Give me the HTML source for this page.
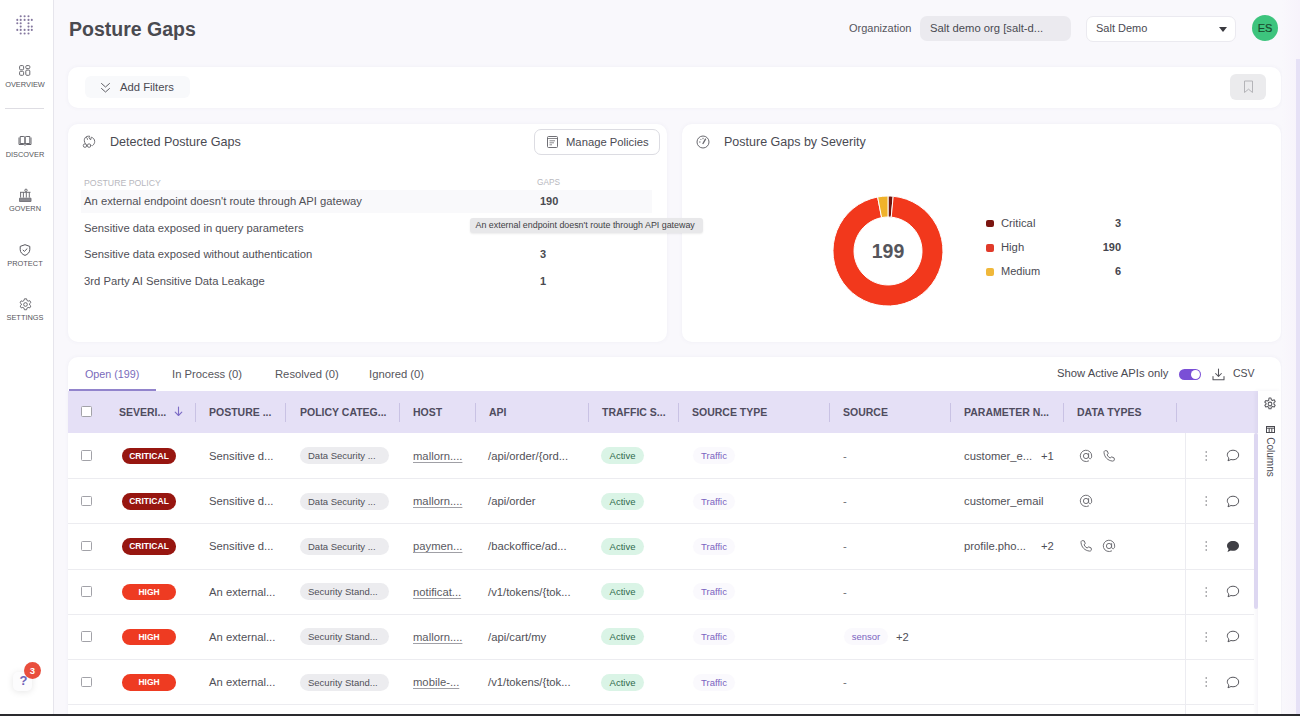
<!DOCTYPE html>
<html><head><meta charset="utf-8">
<style>
*{box-sizing:border-box;margin:0;padding:0}
html,body{width:1300px;height:716px;overflow:hidden}
body{font-family:"Liberation Sans",sans-serif;background:#f9f8fc;position:relative;color:#4a4a52}
.a{position:absolute}
.t{position:absolute;white-space:nowrap;line-height:1}
#side{left:0;top:0;width:54px;height:716px;background:#fff;border-right:1px solid #e6e5ec}
.navl{position:absolute;left:0;width:50px;text-align:center;font-size:7.4px;color:#55555b;line-height:1}
.card{position:absolute;background:#fff;border-radius:10px;box-shadow:0 0 4px rgba(90,80,140,0.06)}
.hd{position:absolute;top:391px;height:42px;background:#e5e0f6}
.th{position:absolute;top:407px;font-size:10.5px;font-weight:bold;color:#4f4c5e;white-space:nowrap;line-height:11px}
.sep{position:absolute;top:403px;width:1px;height:19px;background:#c9c2e4}
.row{position:absolute;left:68px;width:1186px;height:45px;background:#fff}
.cb{position:absolute;width:10.5px;height:10.5px;border:1.2px solid #a2a2a8;border-radius:1.5px;background:#fff}
.cell{position:absolute;font-size:11.25px;color:#505057;white-space:nowrap;line-height:12px}
.sev{position:absolute;left:122px;width:54px;height:16.5px;border-radius:8.25px;color:#fff;font-size:8.5px;font-weight:bold;text-align:center;line-height:16.5px}
.crit{background:#971610}
.high{background:#ee3b22}
.pill{position:absolute;left:300px;width:89px;height:17px;border-radius:8.5px;background:#ececef;font-size:9.5px;color:#505058;padding-left:8px;line-height:17px;white-space:nowrap}
.act{position:absolute;left:601px;width:43px;height:17px;border-radius:8.5px;background:#daf4e6;color:#2f6a4c;font-size:9.5px;text-align:center;line-height:17px}
.trf{position:absolute;left:693px;width:42px;height:17px;border-radius:8.5px;background:#faf9fd;color:#7b63c0;font-size:9.5px;text-align:center;line-height:17px}
.lnk{text-decoration:underline;text-decoration-color:#a0a0a6;text-underline-offset:2px;color:#5a5a62}
.ic{position:absolute}
.sns{position:absolute;left:844px;width:44px;height:17px;border-radius:8.5px;background:#faf9fd;color:#7b63c0;font-size:9.5px;text-align:center;line-height:17px}
.dots{position:absolute;left:1205px;width:3px;height:10px;background:radial-gradient(circle,#66666c 0.9px,transparent 1.1px) 0 0/3px 3.5px}
</style></head>
<body>
<!-- sidebar -->
<div id="side" class="a"></div>
<!-- logo -->
<svg class="ic" style="left:14px;top:13px" width="22" height="24" viewBox="14 13 22 24">
<g fill="#85789f">
<circle cx="20.7" cy="16.2" r="1.05"/><circle cx="24.6" cy="16.2" r="1.05"/><circle cx="28.5" cy="16.2" r="1.05"/>
<circle cx="17.3" cy="19.9" r="1.05"/><circle cx="20.7" cy="19.9" r="1.05"/><circle cx="24.6" cy="19.9" r="1.05"/><circle cx="28.5" cy="19.9" r="1.05"/><circle cx="31.8" cy="19.9" r="1.05"/>
<circle cx="17.3" cy="23.2" r="1.05"/><circle cx="20.7" cy="23.2" r="1.05"/><circle cx="28.5" cy="23.2" r="1.05"/>
<circle cx="20.7" cy="26.6" r="1.05"/><circle cx="28.5" cy="26.6" r="1.05"/><circle cx="31.8" cy="26.6" r="1.05"/>
<circle cx="17.3" cy="29.9" r="1.05"/><circle cx="20.7" cy="29.9" r="1.05"/><circle cx="24.6" cy="29.9" r="1.05"/><circle cx="28.5" cy="29.9" r="1.05"/><circle cx="31.8" cy="29.9" r="1.05"/>
<circle cx="20.7" cy="33.5" r="1.05"/><circle cx="24.6" cy="33.5" r="1.05"/><circle cx="28.5" cy="33.5" r="1.05"/>
</g></svg>
<!-- overview -->
<svg class="ic" style="left:19px;top:65px" width="12" height="11" viewBox="0 0 12 11" fill="none" stroke="#606066" stroke-width="0.95"><rect x="0.600" y="0.600" width="4" height="4.200" rx="1"/><rect x="6.800" y="0.600" width="4" height="3" rx="1"/><rect x="0.600" y="6.300" width="4" height="4" rx="1"/><rect x="6.800" y="5.100" width="4" height="5.200" rx="1"/></svg>
<div class="navl" style="top:80.5px">OVERVIEW</div>
<div class="a" style="left:5px;top:108px;width:39px;height:1px;background:#dedde3"></div>
<!-- discover -->
<svg class="ic" style="left:18px;top:135px" width="14" height="11" viewBox="0 0 14 11" fill="none" stroke="#606066" stroke-width="0.95" stroke-linejoin="round"><path d="M2.200 1.500h3.600c.7 0 1.200.5 1.200 1.200v6.300c-.3-.3-.7-.5-1.200-.5H2.200z M11.800 1.500H8.200c-.7 0-1.200.5-1.200 1.200v6.300c.3-.3.7-.5 1.200-.5h3.600z"/><path d="M1 2.500v7h4.800c.6 0 1 .5 1.200.8.2-.3.6-.8 1.200-.8H13v-7"/></svg>
<div class="navl" style="top:150.5px">DISCOVER</div>
<!-- govern -->
<svg class="ic" style="left:18px;top:188px" width="14" height="15" viewBox="0 0 14 15" fill="none" stroke="#606066" stroke-width="0.9"><circle cx="8" cy="2.300" r="1.200"/><path d="M2 4.300h10.500M2.600 4.300v5.300M5.400 4.300v5.300M8.300 4.300v5.300M11.300 4.300v5.300" /><path d="M1.500 10.200h11.500v3.300H1.500z" fill="#8a8a90" stroke="#707076"/></svg>
<div class="navl" style="top:205px">GOVERN</div>
<!-- protect -->
<svg class="ic" style="left:19px;top:244px" width="12" height="12" viewBox="0 0 12 12" fill="none" stroke="#55555c" stroke-width="1"><path d="M6 0.700L10.800 2.400V5.600c0 2.800-2.100 4.800-4.800 5.800C3.300 10.400 1.200 8.400 1.200 5.600V2.400z"/><path d="M3.800 5.900l1.600 1.500 2.900-2.900"/></svg>
<div class="navl" style="top:259.5px">PROTECT</div>
<!-- settings -->
<svg class="ic" style="left:18.5px;top:297.5px" width="13" height="13" viewBox="0 0 24 24" fill="none" stroke="#606066" stroke-width="1.7"><circle cx="12" cy="12" r="3.400"/><path d="M10 1.500h4l.7 3 2.200 1.300 3-.9 2 3.400-2.300 2.100v2.400l2.300 2.100-2 3.400-3-.9-2.200 1.300-.7 3h-4l-.7-3-2.200-1.300-3 .9-2-3.400 2.300-2.100V10.800L1.900 8.700l2-3.400 3 .9L9.300 4.500z" stroke-linejoin="round"/></svg>
<div class="navl" style="top:313.5px">SETTINGS</div>
<!-- help -->
<div class="a" style="left:13px;top:672px;width:19px;height:19px;border-radius:5px;background:#fcfcfd;box-shadow:0 1px 7px rgba(0,0,0,0.10)"></div>
<div class="t" style="left:19.5px;top:673.5px;font-size:13px;font-weight:bold;color:#6f62b8">?</div>
<div class="a" style="left:24px;top:662.2px;width:17.3px;height:17.3px;border-radius:9px;background:#e94e3c"></div>
<div class="t" style="left:24px;top:666px;width:17px;text-align:center;font-size:9.5px;color:#fff;font-weight:bold">3</div>


<!-- title -->
<div class="t" style="left:69px;top:19.5px;font-size:19.5px;font-weight:bold;color:#4a4a50">Posture Gaps</div>

<!-- top right -->
<div class="t" style="left:849px;top:23px;font-size:11px;color:#55555d">Organization</div>
<div class="a" style="left:920px;top:16px;width:151px;height:25px;border-radius:7px;background:#ebeaef"></div>
<div class="t" style="left:930px;top:23px;font-size:11.25px;color:#4a4a52">Salt demo org [salt-d...</div>
<div class="a" style="left:1086px;top:16px;width:150px;height:26px;border-radius:7px;background:#fff;border:1px solid #ebeaf0"></div>
<div class="t" style="left:1096px;top:23px;font-size:11px;color:#4a4a52">Salt Demo</div>
<div class="a" style="left:1219px;top:27px;width:0;height:0;border-left:4px solid transparent;border-right:4px solid transparent;border-top:5px solid #3a3a40"></div>
<div class="a" style="left:1252px;top:15px;width:26px;height:26px;border-radius:13px;background:#3dc47d"></div>
<div class="t" style="left:1252px;top:23px;width:26px;text-align:center;font-size:11px;color:#1b4a2e;-webkit-text-stroke:0.2px #1b4a2e">ES</div>

<!-- filter bar -->
<div class="card" style="left:68px;top:67px;width:1213px;height:41px"></div>
<div class="a" style="left:85px;top:76px;width:105px;height:22px;border-radius:6px;background:#f8f9fb"></div>
<div class="t" style="left:120px;top:81.7px;font-size:11.25px;color:#4a4a52">Add Filters</div>
<svg class="ic" style="left:100px;top:82px" width="11" height="12" viewBox="0 0 11 12" fill="none" stroke="#606066" stroke-width="1" stroke-linecap="round" stroke-linejoin="round"><path d="M1.500 1.500l4 3.500 4-3.500M1.500 6.500l4 3.500 4-3.500"/></svg>

<div class="a" style="left:1230px;top:74px;width:36px;height:26px;border-radius:6px;background:#ebebed"></div>
<svg class="ic" style="left:1243px;top:80px" width="11" height="14" viewBox="0 0 11 14" fill="none" stroke="#b4b4b8" stroke-width="1"><path d="M1.500 1h8v11.500L5.500 9.200 1.500 12.500z"/></svg>


<!-- left card -->
<div class="card" style="left:68px;top:124px;width:599px;height:218px"></div>
<div class="t" style="left:110px;top:136px;font-size:12.6px;color:#4a4a52">Detected Posture Gaps</div>
<svg class="ic" style="left:80px;top:133px" width="19" height="17" viewBox="0 0 19 17" fill="none" stroke="#6a6a70" stroke-width="0.95" stroke-linecap="round" stroke-linejoin="round"><circle cx="5" cy="12.6" r="1.75"/><circle cx="9.1" cy="12.6" r="1.75"/><path d="M5.3 10.6C4.100 9 3.900 6.500 5 4.900 6 3.500 7.800 3 9.700 3.200L9 4.700l1.600 2.200.7-2.700C13.200 4.700 14.700 6.300 14.700 8.500 14.700 10.100 13.900 11.600 12.600 12.600"/><path d="M6.300 4.400c.8.4 1.300 1.200 1.200 2"/></svg>

<div class="a" style="left:534px;top:129px;width:126px;height:26px;border-radius:7px;border:1px solid #dcdce2;background:#fff"></div>
<svg class="ic" style="left:547px;top:136px" width="11" height="12" viewBox="0 0 11 12" fill="none" stroke="#606066" stroke-width="0.9"><rect x="0.500" y="0.500" width="10" height="11" rx="1"/><path d="M0.500 2.500h10M2.500 4.800h5.500M2.500 6.800h4.500M2.500 8.800h2.500" stroke-width="0.75"/></svg>

<div class="t" style="left:566px;top:136.5px;font-size:11.25px;color:#4a4a52">Manage Policies</div>
<div class="t" style="left:84px;top:178.5px;font-size:8.75px;color:#b8b8be">POSTURE POLICY</div>
<div class="t" style="left:537px;top:178.5px;font-size:8.25px;color:#b8b8be">GAPS</div>
<div class="a" style="left:81px;top:190px;width:571px;height:23px;background:#f9f9fb"></div>
<div class="t" style="left:84px;top:196px;font-size:11.25px;color:#505057">An external endpoint doesn't route through API gateway</div>
<div class="t" style="left:540px;top:196px;font-size:11px;font-weight:bold;color:#4a4a50">190</div>
<div class="t" style="left:84px;top:223px;font-size:11.25px;color:#505057">Sensitive data exposed in query parameters</div>
<div class="t" style="left:84px;top:249px;font-size:11.25px;color:#505057">Sensitive data exposed without authentication</div>
<div class="t" style="left:540px;top:249px;font-size:11px;font-weight:bold;color:#4a4a50">3</div>
<div class="t" style="left:84px;top:276px;font-size:11.25px;color:#505057">3rd Party AI Sensitive Data Leakage</div>
<div class="t" style="left:540px;top:276px;font-size:11px;font-weight:bold;color:#4a4a50">1</div>


<!-- right card -->
<div class="card" style="left:682px;top:124px;width:599px;height:218px"></div>
<div class="t" style="left:724px;top:136px;font-size:12.5px;color:#4a4a52">Posture Gaps by Severity</div>
<svg class="ic" style="left:0;top:0" width="1300" height="400" viewBox="0 0 1300 400">
<path d="M888.00 196.00A55 55 0 0 1 893.20 196.25L891.22 217.15A34 34 0 0 0 888.00 217.00Z" fill="#6e140c" stroke="#fff" stroke-width="1"/>
<path d="M893.20 196.25A55 55 0 1 1 877.64 196.98L881.60 217.61A34 34 0 1 0 891.22 217.15Z" fill="#f2381c" stroke="#fff" stroke-width="1"/>
<path d="M877.64 196.98A55 55 0 0 1 888.00 196.00L888.00 217.00A34 34 0 0 0 881.60 217.61Z" fill="#f0b22a" stroke="#fff" stroke-width="1"/>
</svg>
<div class="t" style="left:848px;top:241.5px;width:80px;text-align:center;font-size:19.5px;font-weight:bold;color:#55555b">199</div>
<div class="a" style="left:986px;top:219.8px;width:7.7px;height:7.7px;border-radius:2px;background:#7b1510"></div>
<div class="a" style="left:986px;top:244px;width:7.7px;height:7.7px;border-radius:2px;background:#e03a2a"></div>
<div class="a" style="left:986px;top:268.2px;width:7.7px;height:7.7px;border-radius:2px;background:#f0b83a"></div>
<div class="t" style="left:1001px;top:217.5px;font-size:11.25px;color:#4a4a52">Critical</div>
<div class="t" style="left:1001px;top:241.8px;font-size:11.25px;color:#4a4a52">High</div>
<div class="t" style="left:1001px;top:266px;font-size:11px;color:#4a4a52">Medium</div>
<div class="t" style="left:1061px;top:217.5px;width:60px;text-align:right;font-size:11px;font-weight:bold;color:#45454d">3</div>
<div class="t" style="left:1061px;top:241.8px;width:60px;text-align:right;font-size:11px;font-weight:bold;color:#45454d">190</div>
<div class="t" style="left:1061px;top:266px;width:60px;text-align:right;font-size:11px;font-weight:bold;color:#45454d">6</div>
<!-- gauge icon -->
<svg class="ic" style="left:696px;top:135px" width="14" height="14" viewBox="0 0 14 14" fill="none" stroke="#6a6a70" stroke-width="1"><circle cx="7" cy="7" r="6"/><path d="M7 8.500L9.500 4.200" stroke-width="1.400" stroke-linecap="round"/><path d="M3.500 7h.6M4.600 4.200l.4.4M7 3.200v.6" stroke-linecap="round"/></svg>


<div class="a" style="left:470px;top:218px;width:233px;height:15px;border-radius:3px;background:#e8e8ea;box-shadow:0 1px 2px rgba(0,0,0,0.08)"></div>
<div class="t" style="left:475.5px;top:221px;font-size:8.9px;color:#3f3f45">An external endpoint doesn't route through API gateway</div>
<!-- table card -->
<div class="card" style="left:68px;top:357px;width:1213px;height:380px"></div>
<div class="t" style="left:85px;top:368.7px;font-size:10.75px;color:#7a6bbb">Open (199)</div>
<div class="a" style="left:69px;top:388.5px;width:87px;height:2px;background:#9284cc"></div>
<div class="t" style="left:172px;top:368.7px;font-size:11.25px;color:#56565c">In Process (0)</div>
<div class="t" style="left:275px;top:368.7px;font-size:11.25px;color:#56565c">Resolved (0)</div>
<div class="t" style="left:369px;top:368.7px;font-size:11.25px;color:#56565c">Ignored (0)</div>
<div class="t" style="left:1057px;top:368px;font-size:11.25px;color:#4a4a52">Show Active APIs only</div>
<div class="a" style="left:1179px;top:369px;width:22px;height:11px;border-radius:6px;background:#7a4fd6"></div>
<div class="a" style="left:1191px;top:370px;width:9px;height:9px;border-radius:5px;background:#fff"></div>
<div class="t" style="left:1233px;top:368px;font-size:10.5px;color:#4a4a52">CSV</div>
<svg class="ic" style="left:1212px;top:368px" width="13" height="13" viewBox="0 0 13 13" fill="none" stroke="#55555c" stroke-width="1.05" stroke-linecap="round" stroke-linejoin="round"><path d="M6.500 1v7.200M3.600 5.500l2.900 2.900 2.900-2.900M1 8.500v3.200h11V8.500"/></svg>



<div class="hd" style="left:68px;width:1190px"></div>
<div class="cb" style="left:81px;top:406px"></div>
<div class="th" style="left:119px">SEVERI...</div>
<svg class="ic" style="left:174px;top:406px" width="9" height="11" viewBox="0 0 9 11" fill="none" stroke="#7d6cc6" stroke-width="1.1" stroke-linecap="round" stroke-linejoin="round"><path d="M4.5 1v8.5M1.2 6.200l3.300 3.300 3.300-3.300"/></svg>
<div class="sep" style="left:195px"></div>
<div class="th" style="left:209px">POSTURE ...</div>
<div class="sep" style="left:285px"></div>
<div class="th" style="left:300px">POLICY CATEG...</div>
<div class="sep" style="left:399px"></div>
<div class="th" style="left:413px">HOST</div>
<div class="sep" style="left:475px"></div>
<div class="th" style="left:489px">API</div>
<div class="sep" style="left:588px"></div>
<div class="th" style="left:602px">TRAFFIC S...</div>
<div class="sep" style="left:678px"></div>
<div class="th" style="left:692px">SOURCE TYPE</div>
<div class="sep" style="left:829px"></div>
<div class="th" style="left:843px">SOURCE</div>
<div class="sep" style="left:950px"></div>
<div class="th" style="left:964px">PARAMETER N...</div>
<div class="sep" style="left:1063px"></div>
<div class="th" style="left:1077px">DATA TYPES</div>
<div class="sep" style="left:1176px"></div>

<!--rows-->
<div class="row" style="top:433px;height:45.3px"></div>
<div class="cb" style="left:81px;top:450.1px"></div>
<div class="sev crit" style="top:447.6px">CRITICAL</div>
<div class="cell" style="left:209px;top:449.6px">Sensitive d...</div>
<div class="pill" style="top:447.1px">Data Security ...</div>
<div class="cell lnk" style="left:413px;top:449.6px">mallorn....</div>
<div class="cell" style="left:488px;top:449.6px">/api/order/{ord...</div>
<div class="act" style="top:447.1px">Active</div>
<div class="trf" style="top:447.1px">Traffic</div>
<div class="cell" style="left:843px;top:449.6px;color:#707076">-</div>
<div class="cell" style="left:964px;top:449.6px">customer_e...</div>
<div class="cell" style="left:1041px;top:449.6px">+1</div>
<svg class="ic" style="left:1079px;top:448.6px" width="14" height="14" viewBox="0 0 14 14"><circle cx="7" cy="7" r="2.6" fill="none" stroke="#6a6a70" stroke-width="0.95"/><path d="M9.6 4.6v3.4c0 1.1.7 1.7 1.5 1.7s1.6-.8 1.6-2.6A5.7 5.7 0 1 0 9.6 12" fill="none" stroke="#6a6a70" stroke-width="0.95" stroke-linecap="round"/></svg>
<svg class="ic" style="left:1102px;top:448.6px" width="14" height="14" viewBox="0 0 14 14"><path d="M3.2 1.6l2 0.3 1.1 2.7-1.3 1.1c.7 1.6 1.8 2.7 3.3 3.4l1.1-1.3 2.7 1.1.3 2c-.2.8-1 1.3-1.9 1.2C5.700 11.500 2.500 8.300 2 3.500c-.1-.9.4-1.700 1.200-1.900z" fill="none" stroke="#65656b" stroke-width="0.95" stroke-linejoin="round"/></svg>
<svg class="ic" style="left:1204px;top:449.6px" width="4" height="12" viewBox="0 0 4 12" fill="#6a6a70"><circle cx="2.2" cy="2" r="0.75"/><circle cx="2.2" cy="6" r="0.75"/><circle cx="2.2" cy="9.9" r="0.75"/></svg>
<svg class="ic" style="left:1226px;top:449.1px" width="14" height="13" viewBox="0 0 14 13"><path d="M7 1.2C3.8 1.200 1.300 3.200 1.300 5.800c0 1.300.6 2.400 1.600 3.200L2 11.800l3-1.300c.6.200 1.300.3 2 .3 3.200 0 5.700-2 5.700-4.800S10.200 1.200 7 1.200z" fill="none" stroke="#58585e" stroke-width="1" stroke-linejoin="round"/></svg>
<div class="row" style="top:478.3px;height:45.3px"></div>
<div class="cb" style="left:81px;top:495.5px"></div>
<div class="sev crit" style="top:493.0px">CRITICAL</div>
<div class="cell" style="left:209px;top:495.0px">Sensitive d...</div>
<div class="pill" style="top:492.5px">Data Security ...</div>
<div class="cell lnk" style="left:413px;top:495.0px">mallorn....</div>
<div class="cell" style="left:488px;top:495.0px">/api/order</div>
<div class="act" style="top:492.5px">Active</div>
<div class="trf" style="top:492.5px">Traffic</div>
<div class="cell" style="left:843px;top:495.0px;color:#707076">-</div>
<div class="cell" style="left:964px;top:495.0px">customer_email</div>
<svg class="ic" style="left:1079px;top:494.0px" width="14" height="14" viewBox="0 0 14 14"><circle cx="7" cy="7" r="2.6" fill="none" stroke="#6a6a70" stroke-width="0.95"/><path d="M9.6 4.6v3.4c0 1.1.7 1.7 1.5 1.7s1.6-.8 1.6-2.6A5.7 5.7 0 1 0 9.6 12" fill="none" stroke="#6a6a70" stroke-width="0.95" stroke-linecap="round"/></svg>
<svg class="ic" style="left:1204px;top:495.0px" width="4" height="12" viewBox="0 0 4 12" fill="#6a6a70"><circle cx="2.2" cy="2" r="0.75"/><circle cx="2.2" cy="6" r="0.75"/><circle cx="2.2" cy="9.9" r="0.75"/></svg>
<svg class="ic" style="left:1226px;top:494.5px" width="14" height="13" viewBox="0 0 14 13"><path d="M7 1.2C3.8 1.200 1.300 3.200 1.300 5.800c0 1.300.6 2.400 1.600 3.200L2 11.800l3-1.300c.6.200 1.300.3 2 .3 3.200 0 5.700-2 5.700-4.800S10.200 1.200 7 1.200z" fill="none" stroke="#58585e" stroke-width="1" stroke-linejoin="round"/></svg>
<div class="row" style="top:523.6px;height:45.3px"></div>
<div class="cb" style="left:81px;top:540.8px"></div>
<div class="sev crit" style="top:538.2px">CRITICAL</div>
<div class="cell" style="left:209px;top:540.2px">Sensitive d...</div>
<div class="pill" style="top:537.8px">Data Security ...</div>
<div class="cell lnk" style="left:413px;top:540.2px">paymen...</div>
<div class="cell" style="left:488px;top:540.2px">/backoffice/ad...</div>
<div class="act" style="top:537.8px">Active</div>
<div class="trf" style="top:537.8px">Traffic</div>
<div class="cell" style="left:843px;top:540.2px;color:#707076">-</div>
<div class="cell" style="left:964px;top:540.2px">profile.pho...</div>
<div class="cell" style="left:1041px;top:540.2px">+2</div>
<svg class="ic" style="left:1079px;top:539.2px" width="14" height="14" viewBox="0 0 14 14"><path d="M3.2 1.6l2 0.3 1.1 2.7-1.3 1.1c.7 1.6 1.8 2.7 3.3 3.4l1.1-1.3 2.7 1.1.3 2c-.2.8-1 1.3-1.9 1.2C5.700 11.500 2.500 8.300 2 3.500c-.1-.9.4-1.700 1.200-1.900z" fill="none" stroke="#65656b" stroke-width="0.95" stroke-linejoin="round"/></svg>
<svg class="ic" style="left:1102px;top:539.2px" width="14" height="14" viewBox="0 0 14 14"><circle cx="7" cy="7" r="2.6" fill="none" stroke="#6a6a70" stroke-width="0.95"/><path d="M9.6 4.6v3.4c0 1.1.7 1.7 1.5 1.7s1.6-.8 1.6-2.6A5.7 5.7 0 1 0 9.6 12" fill="none" stroke="#6a6a70" stroke-width="0.95" stroke-linecap="round"/></svg>
<svg class="ic" style="left:1204px;top:540.2px" width="4" height="12" viewBox="0 0 4 12" fill="#6a6a70"><circle cx="2.2" cy="2" r="0.75"/><circle cx="2.2" cy="6" r="0.75"/><circle cx="2.2" cy="9.9" r="0.75"/></svg>
<svg class="ic" style="left:1226px;top:539.8px" width="14" height="13" viewBox="0 0 14 13"><path d="M7 1C3.6 1 1 3.100 1 5.800c0 1.300.6 2.400 1.600 3.300L1.500 12l3.300-1.500c.7.200 1.400.3 2.200.3 3.400 0 6-2.100 6-5S10.400 1 7 1z" fill="#3f3f45"/></svg>
<div class="row" style="top:568.9px;height:45.3px"></div>
<div class="cb" style="left:81px;top:586.0px"></div>
<div class="sev high" style="top:583.5px">HIGH</div>
<div class="cell" style="left:209px;top:585.5px">An external...</div>
<div class="pill" style="top:583.0px">Security Stand...</div>
<div class="cell lnk" style="left:413px;top:585.5px">notificat...</div>
<div class="cell" style="left:488px;top:585.5px">/v1/tokens/{tok...</div>
<div class="act" style="top:583.0px">Active</div>
<div class="trf" style="top:583.0px">Traffic</div>
<div class="cell" style="left:843px;top:585.5px;color:#707076">-</div>
<svg class="ic" style="left:1204px;top:585.5px" width="4" height="12" viewBox="0 0 4 12" fill="#6a6a70"><circle cx="2.2" cy="2" r="0.75"/><circle cx="2.2" cy="6" r="0.75"/><circle cx="2.2" cy="9.9" r="0.75"/></svg>
<svg class="ic" style="left:1226px;top:585.0px" width="14" height="13" viewBox="0 0 14 13"><path d="M7 1.2C3.8 1.200 1.300 3.200 1.300 5.800c0 1.300.6 2.400 1.600 3.200L2 11.800l3-1.300c.6.200 1.300.3 2 .3 3.200 0 5.700-2 5.700-4.800S10.200 1.200 7 1.200z" fill="none" stroke="#58585e" stroke-width="1" stroke-linejoin="round"/></svg>
<div class="row" style="top:614.2px;height:45.3px"></div>
<div class="cb" style="left:81px;top:631.4px"></div>
<div class="sev high" style="top:628.9px">HIGH</div>
<div class="cell" style="left:209px;top:630.9px">An external...</div>
<div class="pill" style="top:628.4px">Security Stand...</div>
<div class="cell lnk" style="left:413px;top:630.9px">mallorn....</div>
<div class="cell" style="left:488px;top:630.9px">/api/cart/my</div>
<div class="act" style="top:628.4px">Active</div>
<div class="trf" style="top:628.4px">Traffic</div>
<div class="sns" style="top:628.4px">sensor</div>
<div class="cell" style="left:896px;top:630.9px">+2</div>
<svg class="ic" style="left:1204px;top:630.9px" width="4" height="12" viewBox="0 0 4 12" fill="#6a6a70"><circle cx="2.2" cy="2" r="0.75"/><circle cx="2.2" cy="6" r="0.75"/><circle cx="2.2" cy="9.9" r="0.75"/></svg>
<svg class="ic" style="left:1226px;top:630.4px" width="14" height="13" viewBox="0 0 14 13"><path d="M7 1.2C3.8 1.200 1.300 3.200 1.300 5.800c0 1.300.6 2.400 1.600 3.200L2 11.800l3-1.300c.6.200 1.300.3 2 .3 3.200 0 5.700-2 5.700-4.800S10.200 1.200 7 1.200z" fill="none" stroke="#58585e" stroke-width="1" stroke-linejoin="round"/></svg>
<div class="row" style="top:659.5px;height:45.3px"></div>
<div class="cb" style="left:81px;top:676.6px"></div>
<div class="sev high" style="top:674.1px">HIGH</div>
<div class="cell" style="left:209px;top:676.1px">An external...</div>
<div class="pill" style="top:673.6px">Security Stand...</div>
<div class="cell lnk" style="left:413px;top:676.1px">mobile-...</div>
<div class="cell" style="left:488px;top:676.1px">/v1/tokens/{tok...</div>
<div class="act" style="top:673.6px">Active</div>
<div class="trf" style="top:673.6px">Traffic</div>
<div class="cell" style="left:843px;top:676.1px;color:#707076">-</div>
<svg class="ic" style="left:1204px;top:676.1px" width="4" height="12" viewBox="0 0 4 12" fill="#6a6a70"><circle cx="2.2" cy="2" r="0.75"/><circle cx="2.2" cy="6" r="0.75"/><circle cx="2.2" cy="9.9" r="0.75"/></svg>
<svg class="ic" style="left:1226px;top:675.6px" width="14" height="13" viewBox="0 0 14 13"><path d="M7 1.2C3.8 1.200 1.300 3.200 1.300 5.800c0 1.300.6 2.400 1.600 3.200L2 11.800l3-1.300c.6.200 1.300.3 2 .3 3.200 0 5.700-2 5.700-4.800S10.200 1.200 7 1.200z" fill="none" stroke="#58585e" stroke-width="1" stroke-linejoin="round"/></svg>
<div class="a" style="left:68px;top:478px;width:1186px;height:1px;background:#ececf0"></div>
<div class="a" style="left:68px;top:523px;width:1186px;height:1px;background:#ececf0"></div>
<div class="a" style="left:68px;top:569px;width:1186px;height:1px;background:#ececf0"></div>
<div class="a" style="left:68px;top:614px;width:1186px;height:1px;background:#ececf0"></div>
<div class="a" style="left:68px;top:659px;width:1186px;height:1px;background:#ececf0"></div>
<div class="a" style="left:68px;top:704px;width:1186px;height:1px;background:#ececf0"></div>
<div class="a" style="left:1185px;top:433px;width:1px;height:283px;background:#ececf1"></div>
<!--endrows-->
<!-- columns panel -->
<div class="a" style="left:1258px;top:391px;width:23px;height:330px;background:#fff;box-shadow:-2px 0 4px rgba(60,50,120,0.06)"></div>
<svg class="ic" style="left:1263px;top:397px" width="14" height="14" viewBox="0 0 24 24" fill="none" stroke="#5a5a60" stroke-width="1.8"><circle cx="12" cy="12" r="3.200"/><path d="M10.300 1.800h3.400l.6 2.900 2.100 1.200 2.800-1 1.700 2.900-2.200 2v2.400l2.200 2-1.700 2.900-2.800-1-2.100 1.200-.6 2.900h-3.400l-.6-2.900-2.100-1.200-2.800 1-1.700-2.900 2.200-2V10.800l-2.200-2 1.700-2.900 2.800 1 2.100-1.200z" stroke-linejoin="round"/></svg>
<svg class="ic" style="left:1266px;top:426px" width="9" height="7" viewBox="0 0 9 7" fill="none" stroke="#4a4a50" stroke-width="1"><rect x="0.500" y="0.500" width="8" height="6"/><path d="M0.500 2.200h8M3.200 2.200v4.300M5.800 2.200v4.300"/></svg>
<div class="t" style="left:1250px;top:452px;width:40px;text-align:center;font-size:10px;color:#4a4a52;transform:rotate(90deg)">Columns</div>
<!-- row scrollbar -->
<div class="a" style="left:1253.5px;top:433px;width:4px;height:176px;background:#ddd7f1;border-radius:2px"></div>

<!-- page scrollbar -->
<div class="a" style="left:1282px;top:0;width:18px;height:716px;background:linear-gradient(90deg,#f9f8fc,#f7f3fb)"></div><div class="a" style="left:1295.5px;top:59px;width:4.5px;height:657px;background:#e6e1f6"></div>
<div class="a" style="left:0;top:714px;width:1300px;height:2px;background:#2a2a2e"></div>
</body></html>
